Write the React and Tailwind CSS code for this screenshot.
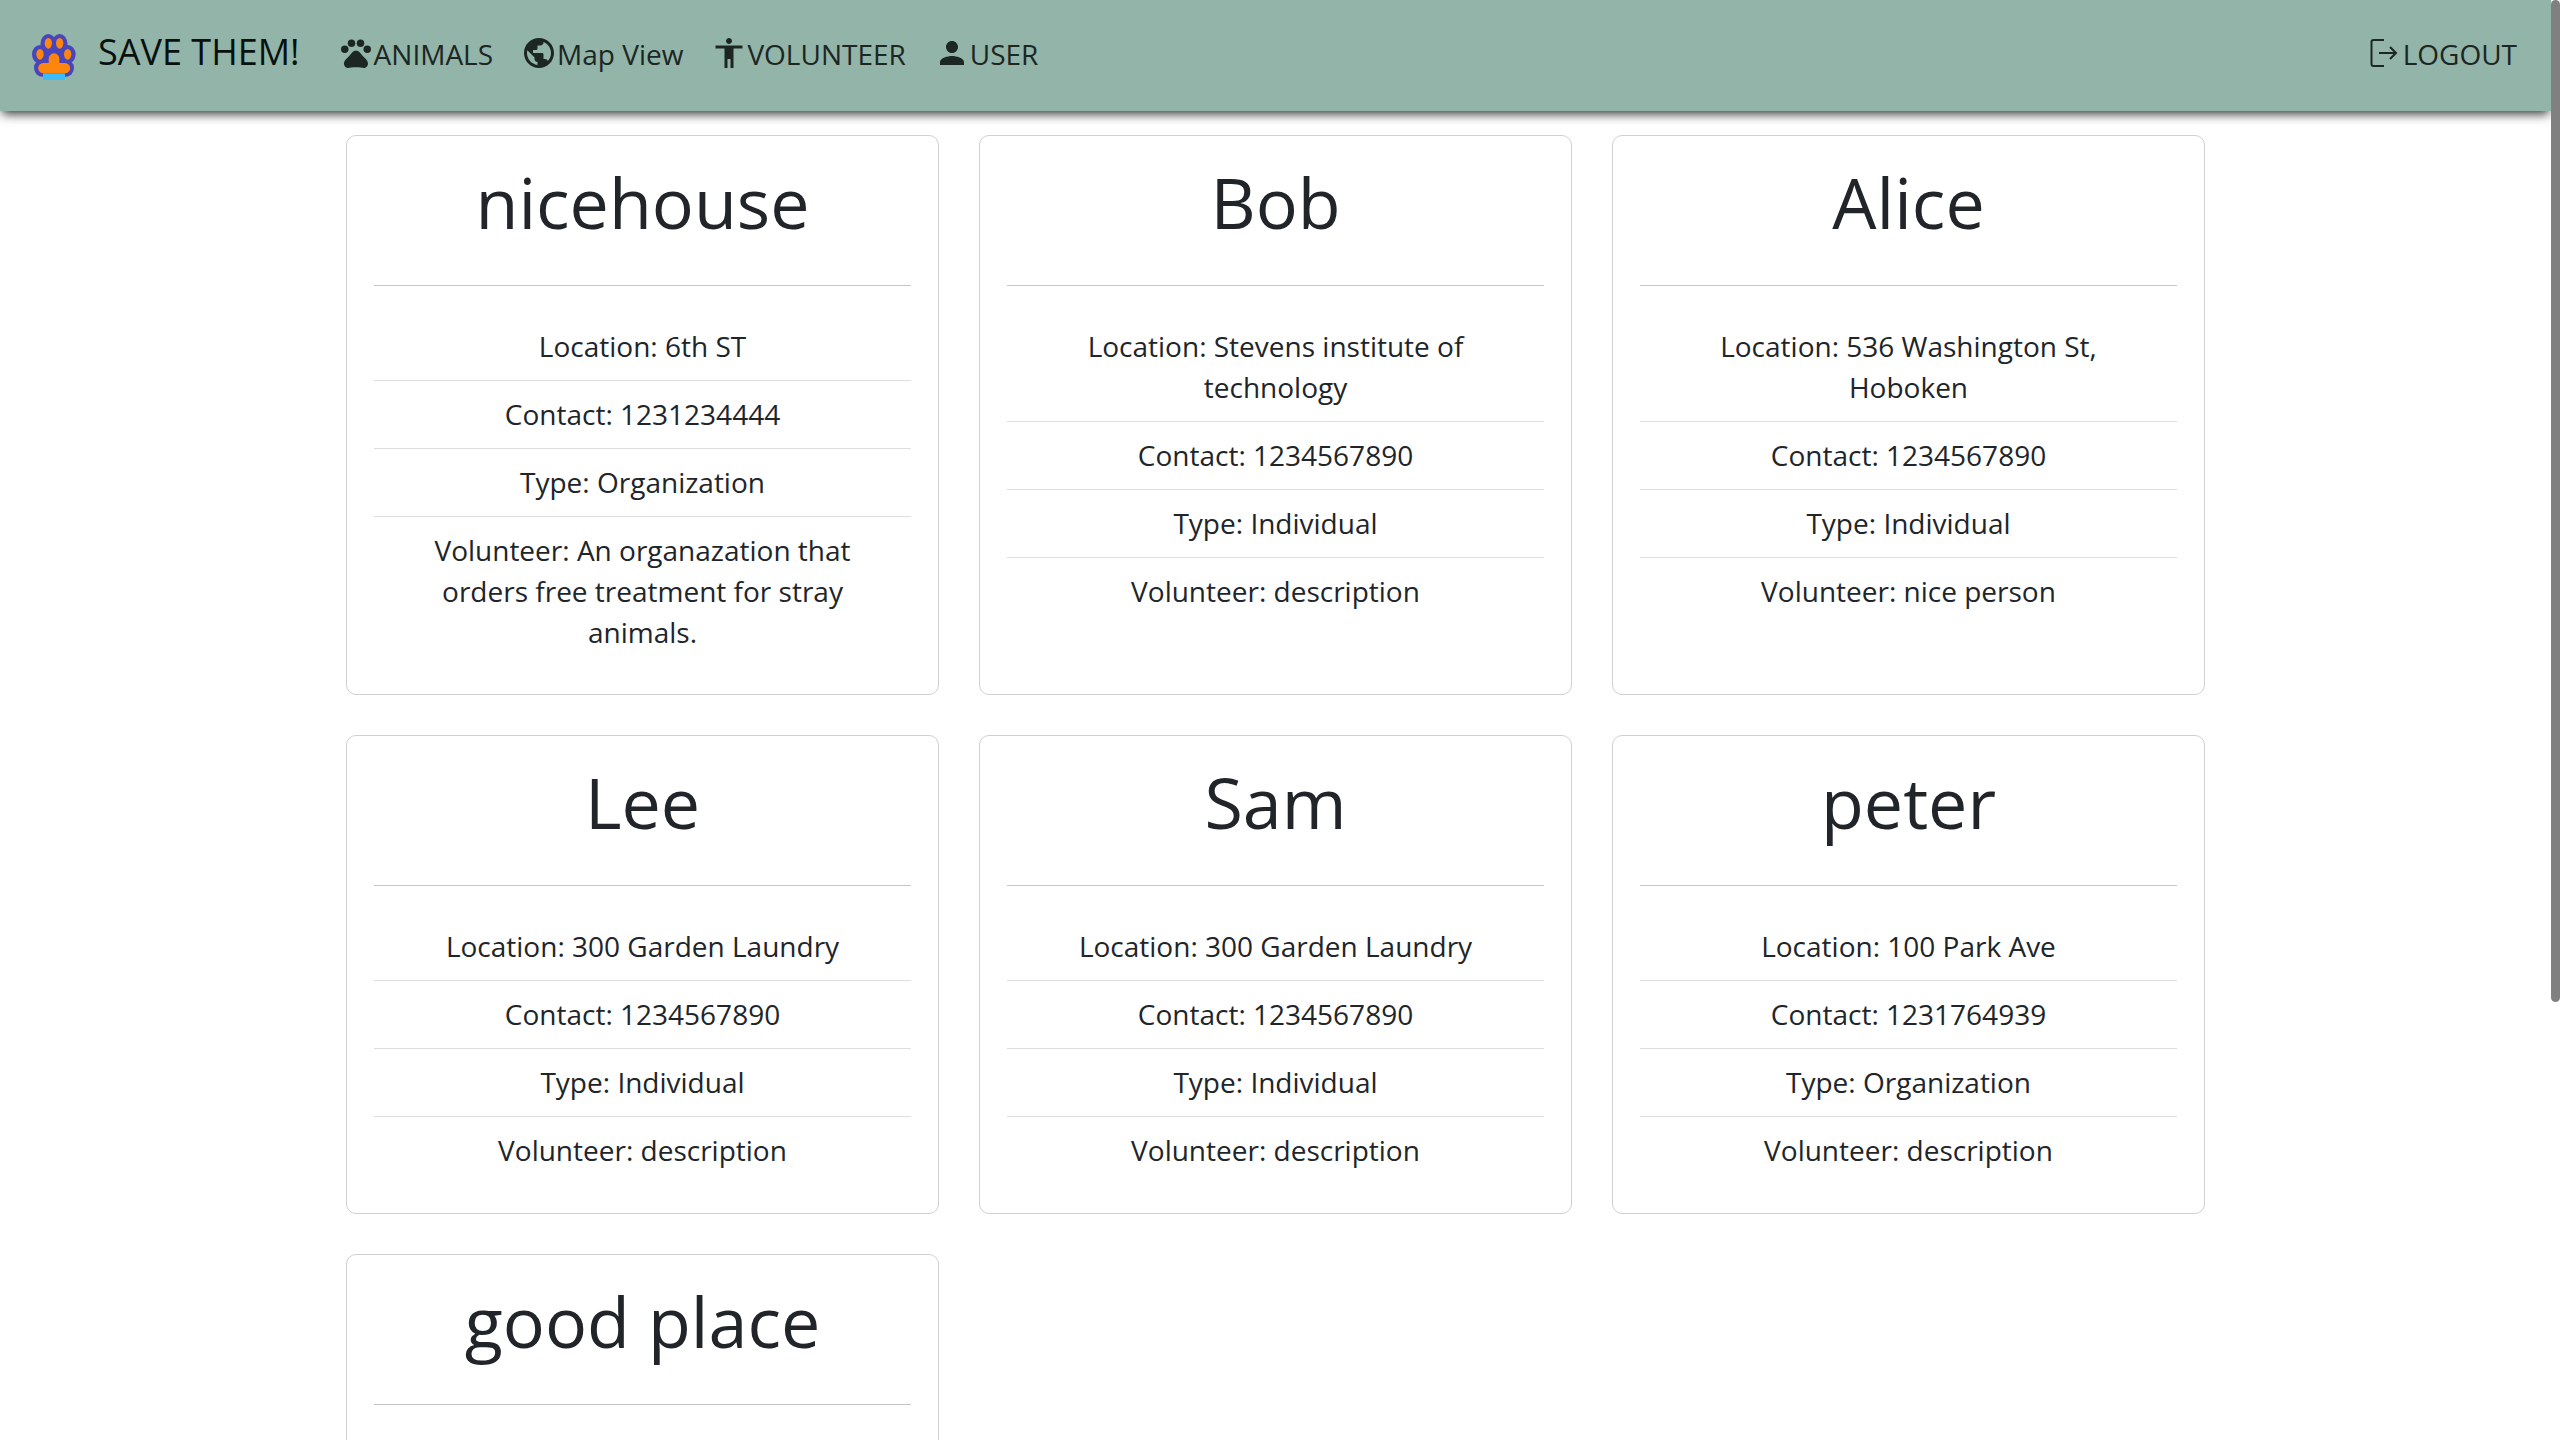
import React from "react";
import { MdPets, MdPublic, MdAccessibility, MdPerson } from "react-icons/md";

const volunteers = [
  { name: "nicehouse", location: "6th ST", contact: "1231234444", type: "Organization", about: "An organazation that orders free treatment for stray animals." },
  { name: "Bob", location: "Stevens institute of technology", contact: "1234567890", type: "Individual", about: "description" },
  { name: "Alice", location: "536 Washington St, Hoboken", contact: "1234567890", type: "Individual", about: "nice person" },
  { name: "Lee", location: "300 Garden Laundry", contact: "1234567890", type: "Individual", about: "description" },
  { name: "Sam", location: "300 Garden Laundry", contact: "1234567890", type: "Individual", about: "description" },
  { name: "peter", location: "100 Park Ave", contact: "1231764939", type: "Organization", about: "description" },
  { name: "good place" },
];

const links = [
  { label: "ANIMALS", Icon: MdPets },
  { label: "Map View", Icon: MdPublic },
  { label: "VOLUNTEER", Icon: MdAccessibility },
  { label: "USER", Icon: MdPerson },
];

function Logo({ className }) {
  return (
    <svg className={className} viewBox="36 42 132 138" aria-hidden="true">
      <g fill="#4845bd">
        <ellipse cx="85" cy="70" rx="23" ry="28" />
        <ellipse cx="119" cy="70" rx="23" ry="28" />
        <ellipse cx="60" cy="103" rx="24" ry="28" />
        <ellipse cx="143" cy="103" rx="24" ry="28" />
        <rect x="42" y="118" width="120" height="52" rx="26" />
        <rect x="62" y="70" width="80" height="70" />
      </g>
      <g fill="#ff860d">
        <ellipse cx="85" cy="70" rx="11" ry="16" />
        <ellipse cx="119" cy="70" rx="11" ry="16" />
        <ellipse cx="60" cy="103" rx="11" ry="16" />
        <ellipse cx="143" cy="103" rx="11" ry="16" />
        <path d="M86 129v-13a16 16 0 0 1 32 0v13h17a15 15 0 0 1 0 31H70a15 15 0 0 1 0-31z" />
      </g>
      <rect x="69" y="160" width="66" height="20" fill="#3ebcf7" />
    </svg>
  );
}

function LogoutIcon({ className }) {
  return (
    <svg className={className} viewBox="0 0 36 36" fill="none" stroke="currentColor" strokeWidth="2" aria-hidden="true">
      <path d="M17 5H6.500A2 2 0 0 0 4.500 7v22a2 2 0 0 0 2 2H17" />
      <path d="M12 18h17.500M23 12l6 6-6 6" />
    </svg>
  );
}

function NavItem({ label, Icon }) {
  return (
    <a href="#" className="flex items-center px-[14px]">
      <Icon className="size-9 shrink-0" aria-hidden="true" />
      <span className="pt-0.5">{label}</span>
    </a>
  );
}

function Card({ person }) {
  const rows = [
    ["Location", person.location],
    ["Contact", person.contact],
    ["Type", person.type],
    ["Volunteer", person.about],
  ].filter(([, value]) => value);
  return (
    <article className="min-h-[479px] rounded-[10px] border border-[#d0d0d1] px-[27px] pt-[22px] pb-7 text-center">
      <h2 className="text-[70px] leading-[88px]">{person.name}</h2>
      <hr className="mt-[39px] mb-[27px] border-[#c4c5c6]" />
      <ul>
        {rows.map(([key, value]) => (
          <li key={key} className="border-b border-[#dedede] px-10 py-[13px] last:border-b-0">
            {key}: {value}
          </li>
        ))}
      </ul>
    </article>
  );
}

export default function App() {
  return (
    <div className="flex h-screen overflow-hidden bg-white font-['Open_Sans','Noto_Sans',sans-serif] text-[28px] leading-[41px] text-[#212529]">
      <div className="min-w-0 flex-1">
        <header className="flex h-[111px] items-center bg-[#92b4a9] pr-5 pb-[5px] pl-8 text-[#1c2623] shadow-[0_5px_10px_-2px_rgba(0,0,0,0.8)]">
          <a href="#" className="mr-6 flex items-center gap-[22px] text-[36px] text-[#08110e]">
            <Logo className="mt-2 h-[46px] w-11" />
            <span className="pb-1">SAVE THEM!</span>
          </a>
          <nav className="flex flex-1 items-center">
            {links.map((link) => (
              <NavItem key={link.label} {...link} />
            ))}
            <div className="ml-auto">
              <NavItem label="LOGOUT" Icon={LogoutIcon} />
            </div>
          </nav>
        </header>
        <main className="mx-auto grid w-full max-w-[1859px] grid-cols-3 gap-10 pt-6">
          {volunteers.map((person) => (
            <Card key={person.name} person={person} />
          ))}
        </main>
      </div>
      <div className="h-[1002px] max-h-full w-[9px] shrink-0 rounded-full bg-[#808080]" />
    </div>
  );
}
